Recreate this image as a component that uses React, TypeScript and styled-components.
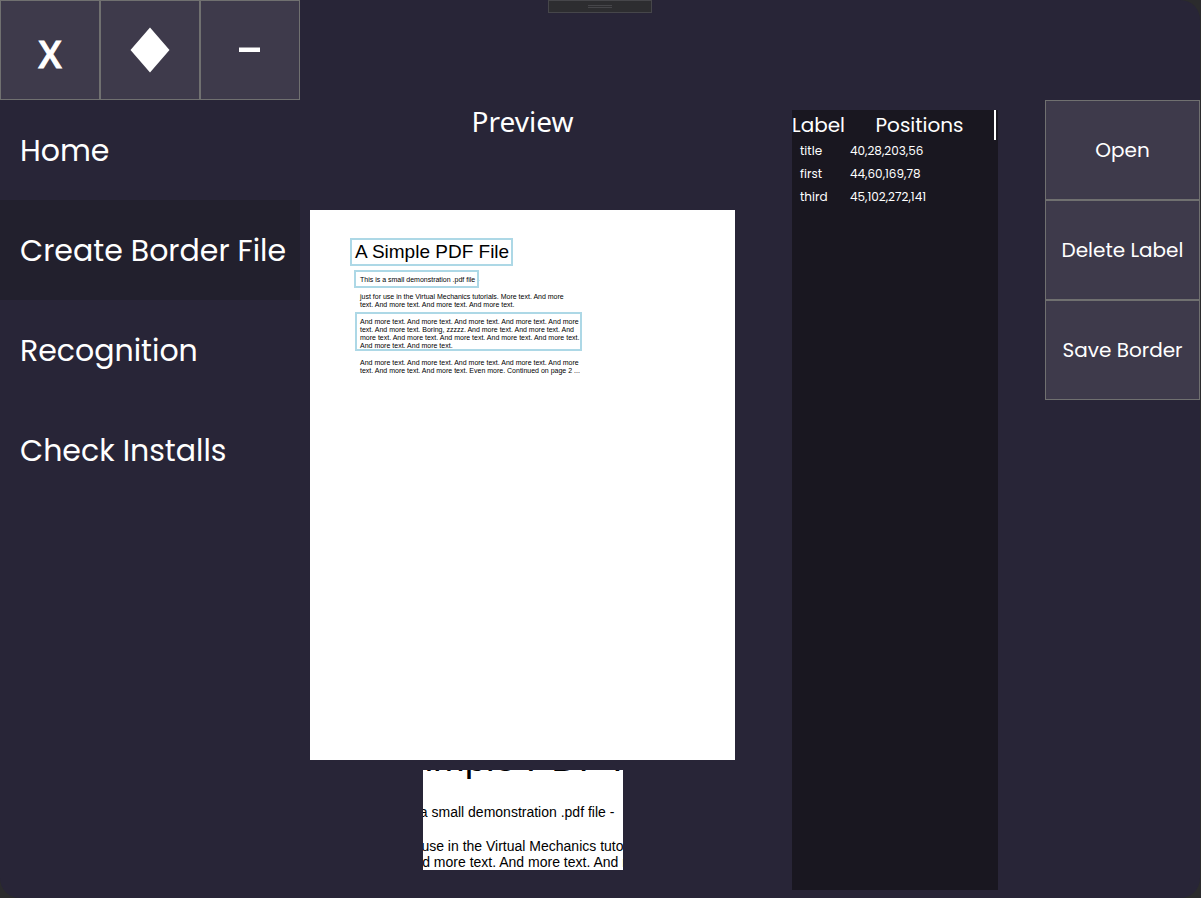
import React from "react";
import styled, { createGlobalStyle } from "styled-components";

const GlobalStyle = createGlobalStyle`
  * { box-sizing: border-box; }
  body {
    margin: 0;
    background: #2b2b2d;
    color: #ffffff;
    font-family: Poppins, Inter, sans-serif;
  }
`;

const Window = styled.div`
  position: relative;
  display: grid;
  grid-template-columns: 300px minmax(445px, 1fr) 300px 155px;
  grid-template-rows: 100px 1fr;
  min-height: 100vh;
  margin-right: 1px;
  background: #282537;
  border-radius: 0 20px 20px 20px;
`;

const PanelButton = styled.button`
  display: flex;
  align-items: center;
  justify-content: center;
  height: 100px;
  padding: 0;
  border: 1px solid #707070;
  background: #3e3a4b;
  color: #ffffff;
  font-family: inherit;
  font-size: 20px;
`;

const WindowControls = styled.div`
  display: grid;
  grid-template-columns: repeat(3, 1fr);
`;

const CloseButton = styled(PanelButton)`
  padding-top: 6px;
  font-family: "Open Sans", "Noto Sans", sans-serif;
  font-size: 37px;
  font-weight: 600;
  -webkit-text-stroke: 1px #ffffff;
`;

const DebugHandle = styled.div`
  position: absolute;
  top: 0;
  left: 50%;
  display: flex;
  align-items: center;
  justify-content: center;
  width: 104px;
  height: 13px;
  margin-left: -52px;
  border: 1px solid #46464a;
  background: #2d2d30;
`;

const Grip = styled.span`
  width: 24px;
  height: 3px;
  border: solid #46464a;
  border-width: 1px 0;
`;

const Nav = styled.nav`
  grid-row: 2;
  display: flex;
  flex-direction: column;
`;

const NavLink = styled.a<{ $active?: boolean }>`
  display: flex;
  align-items: center;
  height: 100px;
  padding: 2px 0 0 20px;
  background: ${(p) => (p.$active ? "#22202d" : "transparent")};
  color: #ffffff;
  font-size: 30px;
  text-decoration: none;
  white-space: nowrap;
`;

const Preview = styled.main`
  grid-row: 2;
  display: flex;
  flex-direction: column;
  align-items: center;
  gap: 10px;
`;

const PreviewTitle = styled.h1`
  height: 100px;
  margin: 0;
  font-family: "Segoe UI", "Noto Sans", sans-serif;
  font-size: 28px;
  font-weight: 400;
  line-height: 42px;
`;

const Page = styled.div`
  position: relative;
  width: 425px;
  height: 550px;
  padding: 31px 0 0 45px;
  background: #ffffff;
`;

const Loupe = styled.div`
  display: flex;
  align-items: flex-end;
  width: 200px;
  height: 100px;
  overflow: hidden;
  background: #ffffff;
`;

const LoupeContent = styled.div`
  margin-left: -57px;
`;

const DocTitle = styled.h2<{ $zoom: number }>`
  margin: 0;
  padding-bottom: ${(p) => 2 + 2 * p.$zoom}px;
  color: #000000;
  font-family: "Liberation Sans", Arial, sans-serif;
  font-size: ${(p) => 19 * p.$zoom}px;
  font-weight: 400;
  line-height: ${(p) => 22 * p.$zoom}px;
  white-space: nowrap;
`;

const DocParagraph = styled.p<{ $zoom: number }>`
  margin: 0 0 0 ${(p) => 5 * p.$zoom}px;
  padding-top: ${(p) => 9 * p.$zoom}px;
  color: #000000;
  font-family: "Liberation Sans", Arial, sans-serif;
  font-size: ${(p) => 7 * p.$zoom}px;
  line-height: ${(p) => 8 * p.$zoom}px;
  white-space: pre;
`;

const Selection = styled.div`
  position: absolute;
  border: 2px solid #add8e6;
`;

const LabelColumn = styled.section`
  grid-row: 2;
  display: flex;
  justify-content: center;
  padding: 10px 0 8px;
`;

const LabelPanel = styled.div`
  width: 206px;
  background: #191720;
`;

const LabelTable = styled.table`
  width: 204px;
  border-collapse: separate;
  border-spacing: 0;
  table-layout: fixed;
`;

const HeadCell = styled.th<{ $width: number; $last?: boolean }>`
  width: ${(p) => p.$width}px;
  height: 30px;
  padding: 0;
  border-right: ${(p) => (p.$last ? "2px solid #ffffff" : "0")};
  font-size: 20px;
  font-weight: 400;
  line-height: 30px;
  text-align: center;
`;

const Cell = styled.td<{ $indent: number }>`
  height: 23px;
  padding: 0 0 2px ${(p) => p.$indent}px;
  font-size: 12px;
  line-height: 21px;
`;

const Actions = styled.div`
  grid-row: 2;
  display: flex;
  flex-direction: column;
`;

const nav = ["Home", "Create Border File", "Recognition", "Check Installs"];
const actions = ["Open", "Delete Label", "Save Border"];

const labels = [
  { name: "title", box: [40, 28, 203, 56] },
  { name: "first", box: [44, 60, 169, 78] },
  { name: "third", box: [45, 102, 272, 141] },
];

const paragraphs = [
  "This is a small demonstration .pdf file -",
  "just for use in the Virtual Mechanics tutorials. More text. And more\ntext. And more text. And more text. And more text.",
  "And more text. And more text. And more text. And more text. And more\ntext. And more text. Boring, zzzzz. And more text. And more text. And\nmore text. And more text. And more text. And more text. And more text.\nAnd more text. And more text.",
  "And more text. And more text. And more text. And more text. And more\ntext. And more text. And more text. Even more. Continued on page 2 ...",
];

function DocumentText({ zoom, count }: { zoom: number; count: number }) {
  return (
    <>
      <DocTitle $zoom={zoom}>A Simple PDF File</DocTitle>
      {paragraphs.slice(0, count).map((text) => (
        <DocParagraph key={text} $zoom={zoom}>
          {text}
        </DocParagraph>
      ))}
    </>
  );
}

export default function App() {
  return (
    <>
      <GlobalStyle />
      <Window>
        <WindowControls>
          <CloseButton aria-label="Close">X</CloseButton>
          <PanelButton aria-label="Maximize">
            <svg width="40" height="46" viewBox="0 0 40 46">
              <path d="M20 0.5 39.5 23 20 45.5 0.5 23Z" fill="#ffffff" />
            </svg>
          </PanelButton>
          <PanelButton aria-label="Minimize">
            <svg width="22" height="6" viewBox="0 0 22 6">
              <path d="M0 0.5H21V5H0Z" fill="#ffffff" />
            </svg>
          </PanelButton>
        </WindowControls>

        <Nav>
          {nav.map((item) => (
            <NavLink key={item} href="#" $active={item === "Create Border File"}>
              {item}
            </NavLink>
          ))}
        </Nav>

        <Preview>
          <PreviewTitle>Preview</PreviewTitle>
          <Page>
            <DocumentText zoom={1} count={4} />
            {labels.map(({ name, box: [left, top, right, bottom] }) => (
              <Selection
                key={name}
                style={{ left, top, width: right - left, height: bottom - top }}
              />
            ))}
          </Page>
          <Loupe>
            <LoupeContent>
              <DocumentText zoom={2} count={2} />
            </LoupeContent>
          </Loupe>
        </Preview>

        <LabelColumn>
          <LabelPanel>
            <LabelTable>
              <thead>
                <tr>
                  <HeadCell $width={53}>Label</HeadCell>
                  <HeadCell $width={151} $last>
                    Positions
                  </HeadCell>
                </tr>
              </thead>
              <tbody>
                {labels.map(({ name, box }) => (
                  <tr key={name}>
                    <Cell $indent={8}>{name}</Cell>
                    <Cell $indent={5}>{box.join(",")}</Cell>
                  </tr>
                ))}
              </tbody>
            </LabelTable>
          </LabelPanel>
        </LabelColumn>

        <Actions>
          {actions.map((action) => (
            <PanelButton key={action}>{action}</PanelButton>
          ))}
        </Actions>

        <DebugHandle>
          <Grip />
        </DebugHandle>
      </Window>
    </>
  );
}
